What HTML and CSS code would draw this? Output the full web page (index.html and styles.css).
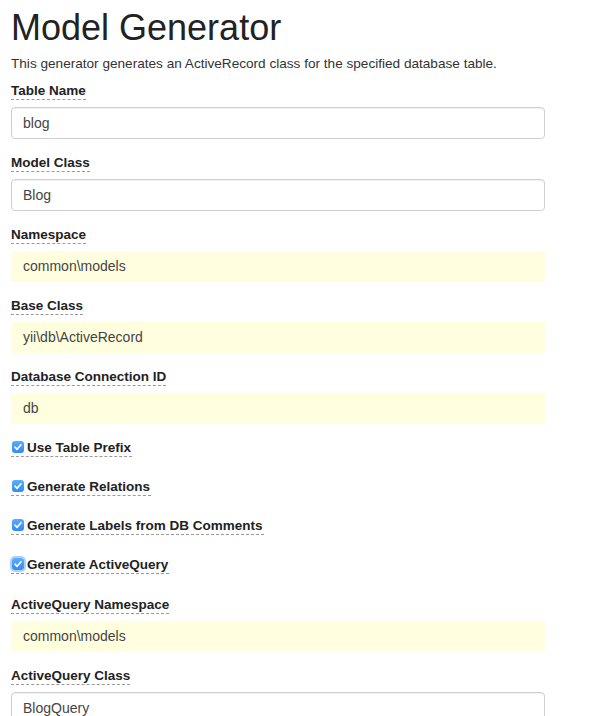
FILE: index.html
```html
<!DOCTYPE html>
<html lang="en">
<head>
<meta charset="utf-8">
<title>Model Generator</title>
<link rel="stylesheet" href="styles.css">
</head>
<body>
<div class="page">
  <h1 class="title">Model Generator</h1>
  <p class="desc">This generator generates an ActiveRecord class for the specified database table.</p>

  <div class="group">
    <label class="help">Table Name</label>
    <div class="field"><span class="input">blog</span></div>
  </div>
  <div class="group">
    <label class="help">Model Class</label>
    <div class="field"><span class="input">Blog</span></div>
  </div>
  <div class="group">
    <label class="help">Namespace</label>
    <div class="field"><span class="sticky">common\models</span></div>
  </div>
  <div class="group">
    <label class="help">Base Class</label>
    <div class="field"><span class="sticky">yii\db\ActiveRecord</span></div>
  </div>
  <div class="group">
    <label class="help">Database Connection ID</label>
    <div class="field"><span class="sticky">db</span></div>
  </div>

  <div class="group check-group">
    <label class="help check"><span class="box"><svg viewBox="0 0 12 12" width="12" height="12"><path d="M3 6.2 L5.1 8.3 L9 3.8" fill="none" stroke="#fff" stroke-width="1.7" stroke-linecap="round" stroke-linejoin="round"/></svg></span>Use Table Prefix</label>
  </div>
  <div class="group check-group">
    <label class="help check"><span class="box"><svg viewBox="0 0 12 12" width="12" height="12"><path d="M3 6.2 L5.1 8.3 L9 3.8" fill="none" stroke="#fff" stroke-width="1.7" stroke-linecap="round" stroke-linejoin="round"/></svg></span>Generate Relations</label>
  </div>
  <div class="group check-group">
    <label class="help check"><span class="box"><svg viewBox="0 0 12 12" width="12" height="12"><path d="M3 6.2 L5.1 8.3 L9 3.8" fill="none" stroke="#fff" stroke-width="1.7" stroke-linecap="round" stroke-linejoin="round"/></svg></span>Generate Labels from DB Comments</label>
  </div>
  <div class="group check-group check-last">
    <label class="help check"><span class="box focus"><svg viewBox="0 0 12 12" width="12" height="12"><path d="M3 6.2 L5.1 8.3 L9 3.8" fill="none" stroke="#fff" stroke-width="1.7" stroke-linecap="round" stroke-linejoin="round"/></svg></span>Generate ActiveQuery</label>
  </div>

  <div class="group">
    <label class="help">ActiveQuery Namespace</label>
    <div class="field"><span class="sticky">common\models</span></div>
  </div>
  <div class="group">
    <label class="help">ActiveQuery Class</label>
    <div class="field"><span class="input">BlogQuery</span></div>
  </div>
</div>
</body>
</html>
```

FILE: styles.css
```css
html, body {
  margin: 0;
  padding: 0;
  background: #ffffff;
}

body {
  font-family: "Liberation Sans", Arial, Helvetica, sans-serif;
  font-size: 14px;
  color: #333333;
}

.page {
  padding: 0 0 0 11px;
  width: 534px;
}

.title {
  font-size: 36px;
  font-weight: 400;
  line-height: 1.1;
  margin: 8px 0 0;
  color: #222222;
}

.desc {
  margin: 6px 0 8px;
  line-height: 20px;
  font-size: 13.6px;
  color: #333333;
}

.group {
  display: flex;
  flex-direction: column;
  align-items: flex-start;
  margin-bottom: 15px;
}

.help {
  display: inline-flex;
  align-items: center;
  font-weight: 700;
  font-size: 13.5px;
  line-height: 17px;
  color: #222222;
  border-bottom: 1px dashed #9a9a9a;
  margin-bottom: 7px;
}

.field {
  align-self: stretch;
  display: flex;
}

.input {
  flex: 1;
  height: 30px;
  line-height: 30px;
  padding: 0 11px;
  border: 1px solid #cfcfcf;
  border-radius: 4px;
  box-shadow: inset 0 1px 1px rgba(0, 0, 0, 0.06);
  background: #ffffff;
  color: #444444;
}

.sticky {
  flex: 1;
  height: 31px;
  line-height: 31px;
  padding: 0 12px;
  background: #ffffe0;
  color: #444444;
}

.check-group {
  margin-bottom: 15px;
}

.check {
  padding-right: 1px;
  margin-bottom: 6px;
}

.check-last {
  margin-top: 1px;
  margin-bottom: 16px;
}

.box {
  display: inline-flex;
  align-items: center;
  justify-content: center;
  width: 12px;
  height: 12px;
  border-radius: 3px;
  background: linear-gradient(#5aaefc, #2f8bf5);
  margin: 0 3px 0 1px;
}

.box svg {
  display: block;
}

.box.focus {
  box-shadow: 0 0 0 2px rgba(80, 150, 245, 0.45);
}
```
